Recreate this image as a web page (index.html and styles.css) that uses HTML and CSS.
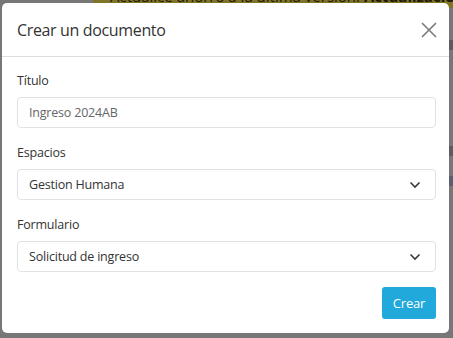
FILE: index.html
```html
<!DOCTYPE html>
<html lang="es">
<head>
<meta charset="utf-8">
<title>Crear un documento</title>
<link rel="stylesheet" href="styles.css">
</head>
<body>
<div class="page">
  <div class="banner"><span class="banner-text">Actualice ahorro a la ultima version. <b>Actualizacion recomendada</b></span></div>
  <div class="side-marks">
    <span class="mark m1"></span>
    <span class="mark m2"></span>
    <span class="mark m3"></span>
  </div>
</div>
<div class="modal">
  <div class="modal-header">
    <h5 class="modal-title">Crear un documento</h5>
    <button class="close" type="button" aria-label="Cerrar">
      <svg width="16" height="16" viewBox="0 0 16 16"><path d="M1 1L15 15M15 1L1 15" stroke="#7a7a7a" stroke-width="1.6" fill="none"/></svg>
    </button>
  </div>
  <div class="modal-body">
    <div class="form-group">
      <label class="form-label">Título</label>
      <div class="form-control">Ingreso 2024AB</div>
    </div>
    <div class="form-group">
      <label class="form-label">Espacios</label>
      <div class="form-control select">
        <span>Gestion Humana</span>
        <svg class="chev" width="12" height="8" viewBox="0 0 12 8"><path d="M1.5 1.5L6 6L10.5 1.5" stroke="#343a40" stroke-width="1.6" fill="none"/></svg>
      </div>
    </div>
    <div class="form-group">
      <label class="form-label">Formulario</label>
      <div class="form-control select">
        <span>Solicitud de ingreso</span>
        <svg class="chev" width="12" height="8" viewBox="0 0 12 8"><path d="M1.5 1.5L6 6L10.5 1.5" stroke="#343a40" stroke-width="1.6" fill="none"/></svg>
      </div>
    </div>
    <div class="actions">
      <button class="btn" type="button">Crear</button>
    </div>
  </div>
</div>
</body>
</html>
```
FILE: styles.css
```css
* { box-sizing: border-box; }
html, body { margin: 0; padding: 0; }
body {
  width: 453px;
  height: 338px;
  overflow: hidden;
  background: #777777;
  font-family: "Open Sans", "Noto Sans", sans-serif;
  position: relative;
}
.page { height: 338px; }
.banner {
  margin-left: 93px;
  height: 8px;
  background: #7f7428;
  overflow: hidden;
  padding-left: 17px;
  white-space: nowrap;
}
.banner-text {
  display: block;
  font-size: 15px;
  line-height: 16px;
  margin-top: -12px;
  color: #1e1a08;
}
.side-marks { position: relative; }
.mark { position: absolute; left: 449px; width: 4px; height: 10px; background: #5c5c5c; }
.m1 { top: 32px; }
.m2 { top: 138px; }
.m3 { top: 168px; background: #5a6070; }

.modal {
  position: absolute;
  left: 2px;
  top: 3px;
  width: 447px;
  height: 330px;
  background: #fff;
  border-radius: 5px;
  color: #333;
}
.modal-header {
  height: 54px;
  border-bottom: 1px solid #dedede;
  display: flex;
  align-items: center;
  justify-content: space-between;
  padding: 1px 12px 0 15px;
}
.modal-title {
  margin: 0;
  font-size: 16px;
  letter-spacing: -0.35px;
  font-weight: 400;
  color: #333;
}
.close {
  border: 0;
  background: none;
  padding: 0;
  width: 16px;
  height: 16px;
  display: flex;
}
.modal-body { padding: 15px 13px 0 15px; }
.form-group { margin-bottom: 16px; }
.form-label {
  display: block;
  font-size: 12.5px;
  letter-spacing: -0.2px;
  line-height: 18px;
  margin-bottom: 7px;
  color: #333;
}
.form-control {
  height: 31px;
  border: 1px solid #e2e2e2;
  border-radius: 4px;
  padding: 0 11px;
  display: flex;
  align-items: center;
  font-size: 12.5px;
  letter-spacing: -0.2px;
  color: #666;
}
.form-control.select {
  justify-content: space-between;
  color: #333;
  padding-right: 14px;
}
.actions {
  display: flex;
  justify-content: flex-end;
  margin-top: -1px;
}
.btn {
  width: 54px;
  height: 32px;
  border: 0;
  border-radius: 3px;
  background: #22a9db;
  color: #fff;
  font-family: inherit;
  font-size: 13px;
  letter-spacing: -0.2px;
  padding: 0;
}
```
